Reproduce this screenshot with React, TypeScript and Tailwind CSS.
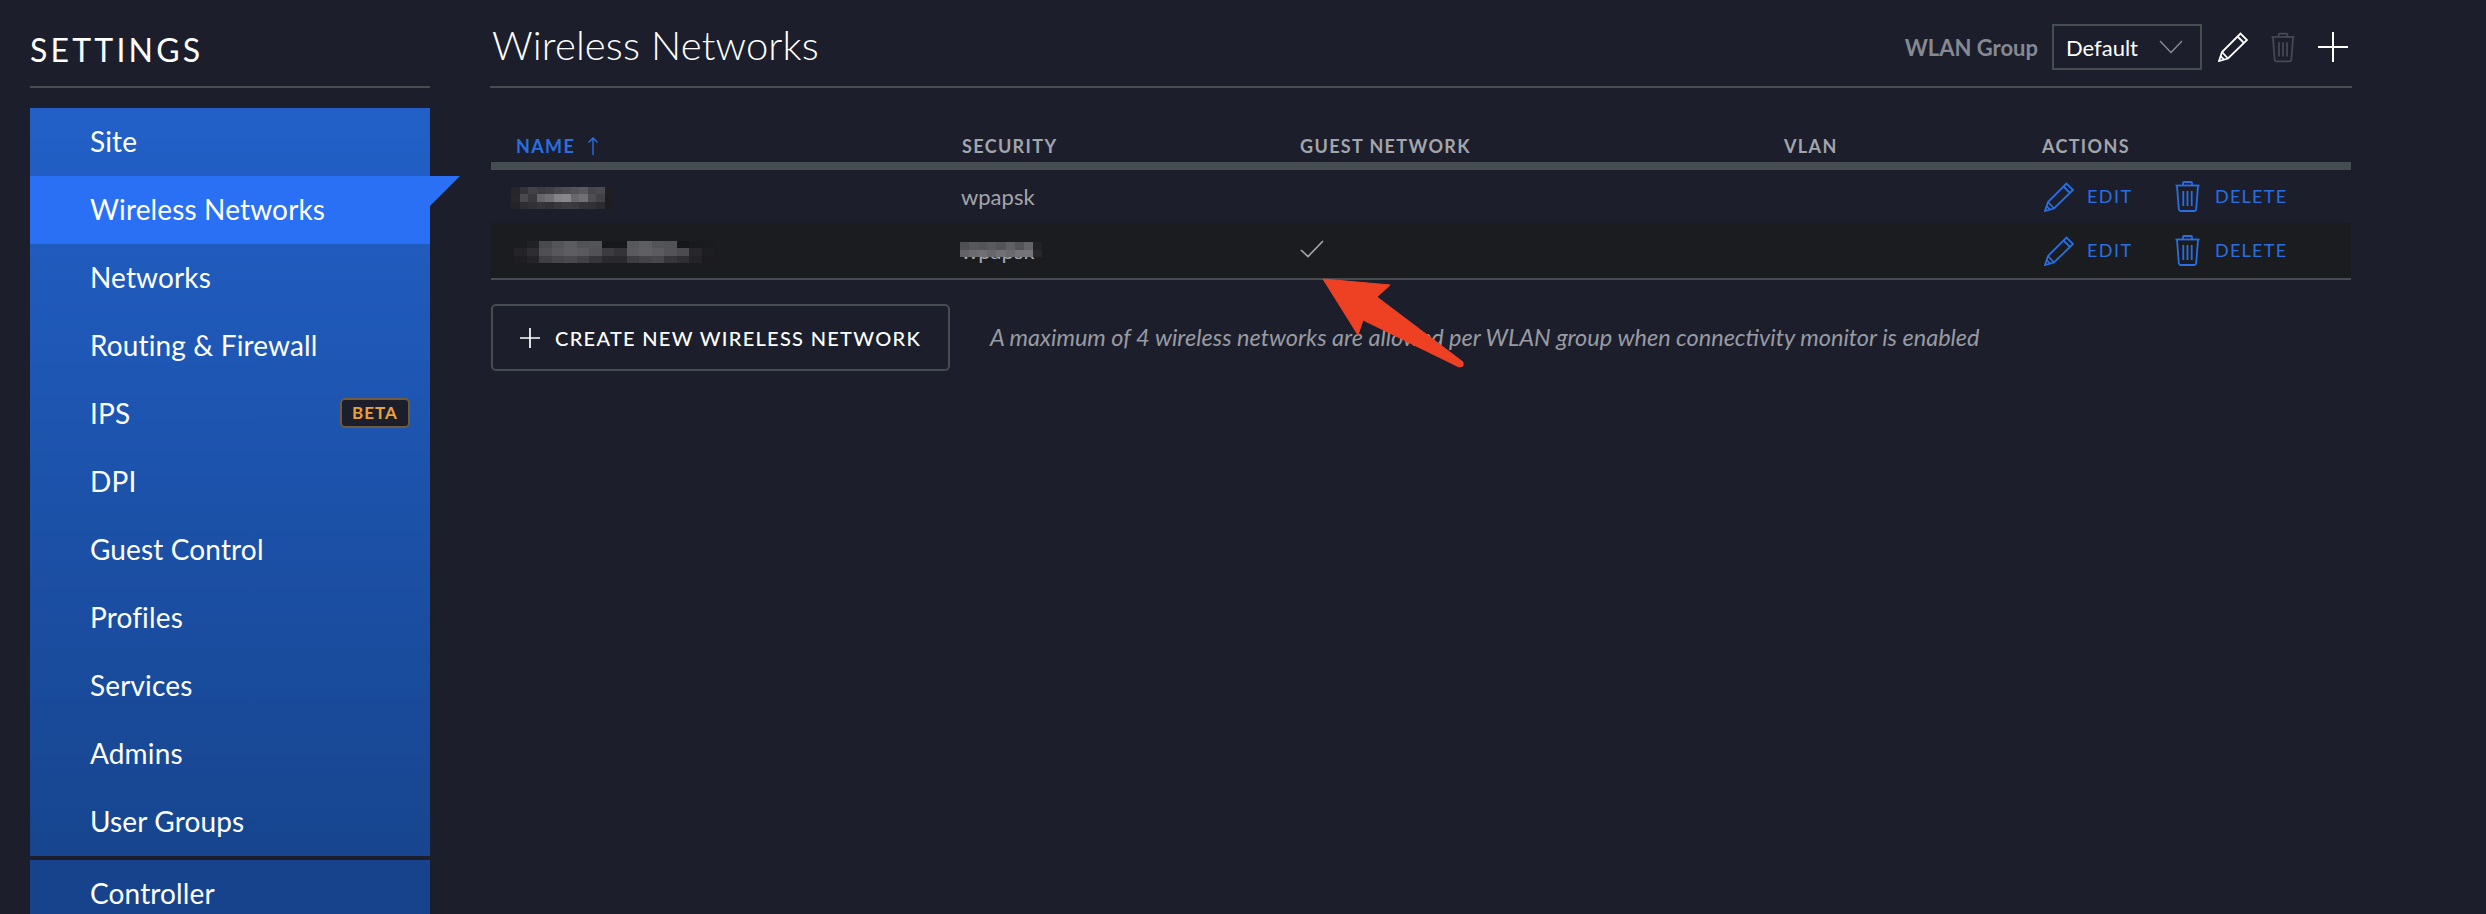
const NAV = ["Site", "Wireless Networks", "Networks", "Routing & Firewall", "IPS", "DPI", "Guest Control", "Profiles", "Services", "Admins", "User Groups"];

function Pencil({ className }: { className: string }) {
  return (
    <svg viewBox="0 0 30 30" className={className} fill="none" stroke="currentColor" strokeWidth="1.8" strokeLinejoin="miter">
      <path d="M1 29 L4 20 L22.5 1.5 L29 8 L10 26.5 Z" />
      <path d="M4 20 L10 26.5" />
      <path d="M19.5 4.5 L26 11" />
      <path d="M2.6 24 L6 27.6" />
    </svg>
  );
}

function Trash({ className }: { className: string }) {
  return (
    <svg viewBox="0 0 25 31" className={className} fill="none" stroke="currentColor" strokeWidth="1.8" strokeLinejoin="round">
      <path d="M0.5 4.5 H24.5" />
      <path d="M2 5 L3.8 28 Q4 30 6 30 H19 Q21 30 21.2 28 L23 5" />
      <path d="M8 4 V1.8 Q8 1 9 1 H16 Q17 1 17 1.8 V4" />
      <path d="M8.3 10 V25 M12.5 10 V25 M16.7 10 V25" />
    </svg>
  );
}

function Mosaic({ w, h, cell, rows, className }: { w: number; h: number; cell: number; rows: number[][]; className: string }) {
  const cellH = h / rows.length;
  return (
    <svg width={w} height={h} className={className} shapeRendering="crispEdges">
      {rows.map((r, y) =>
        r.map((v, x) => (
          <rect key={`${x}-${y}`} x={x * cell} y={y * cellH} width={cell} height={cellH + 0.5} fill={`rgb(${v},${v},${v + 4})`} />
        ))
      )}
    </svg>
  );
}

const M1 = [
  [38, 52, 66, 60, 64, 72, 78, 84, 90, 70, 74, 32],
  [40, 74, 58, 102, 112, 132, 136, 104, 112, 78, 66, 30],
  [36, 46, 50, 54, 50, 56, 60, 58, 52, 50, 44, 29],
];
const M2 = [
  [28, 34, 74, 84, 92, 82, 84, 24, 24, 88, 94, 84, 82, 22, 26, 27],
  [36, 46, 80, 88, 94, 90, 82, 60, 52, 90, 96, 92, 84, 76, 40, 30],
  [30, 36, 64, 70, 74, 66, 54, 42, 42, 62, 68, 72, 54, 48, 36, 28],
];
const M3 = [
  [80, 88, 84, 90, 84, 96, 84, 100, 34],
  [100, 108, 112, 104, 112, 106, 116, 118, 40],
];

function Actions() {
  return (
    <div className="flex items-center text-[#2a6fe0]">
      <Pencil className="w-[30px] h-[30px] ml-[2px]" />
      <span className="ml-[13px] w-[44px] text-[18px] tracking-[0.08em]">EDIT</span>
      <Trash className="w-[25px] h-[31px] ml-[44px]" />
      <span className="ml-[15px] text-[18px] tracking-[0.07em]">DELETE</span>
    </div>
  );
}

function HeaderCell({ className, children }: { className: string; children: React.ReactNode }) {
  return <div className={`text-[18px] font-bold tracking-[0.075em] ${className}`}>{children}</div>;
}

export default function App() {
  return (
    <div className="relative flex h-[914px] w-[2486px] overflow-hidden bg-[#1c1f2b] font-['Lato',sans-serif] text-white">
      <aside className="ml-[30px] w-[400px] shrink-0">
        <div className="flex h-[88px] items-end border-b-2 border-[#454d50] pb-[16px]">
          <h2 className="text-[32px] leading-[40px] tracking-[0.1em]">SETTINGS</h2>
        </div>
        <nav className="mt-[20px] bg-gradient-to-b from-[#2260c8] to-[#17458f]">
          {NAV.map((label, i) =>
            i === 1 ? (
              <div key={label} className="relative flex h-[68px] items-center bg-[#2a70f5] pb-[2px] pl-[60px] text-[28px] tracking-[0.005em]">
                {label}
                <svg viewBox="0 0 30 30" className="absolute left-[400px] top-0 h-[30px] w-[30px]">
                  <polygon points="0,0 30,0 0,30" fill="#2a70f5" />
                </svg>
              </div>
            ) : (
              <div key={label} className="flex h-[68px] items-center justify-between pb-[2px] pl-[60px] pr-[20px] text-[28px] tracking-[0.005em]">
                {label}
                {label === "IPS" && (
                  <span className="flex h-[30px] w-[70px] items-center justify-center rounded-[5px] border-2 border-[#6e5a3c] bg-[#1c1f2b] text-[17px] font-bold tracking-[0.06em] text-[#e8a33d]">
                    BETA
                  </span>
                )}
              </div>
            )
          )}
        </nav>
        <div className="mt-[4px] flex h-[68px] items-center bg-[#17438c] pb-[2px] pl-[60px] text-[28px] tracking-[0.005em]">Controller</div>
      </aside>

      <main className="ml-[60px] w-[1862px] shrink-0">
        <header className="flex h-[88px] items-start justify-between border-b-2 border-[#454d50]">
          <h1 className="ml-[2px] mt-[22px] text-[40px] font-light leading-[46px] tracking-[0.003em]">Wireless Networks</h1>
          <div className="mt-[24px] flex items-center">
            <span className="text-[22px] font-bold text-[#858993]">WLAN Group</span>
            <div className="ml-[14px] flex h-[46px] w-[150px] items-center justify-between border-2 border-[#454d50] pl-[12px] pr-[17px] text-[22px]">
              Default
              <svg viewBox="0 0 24 14" className="h-[14px] w-[24px]" fill="none" stroke="#8a8e96" strokeWidth="1.3">
                <path d="M1 1 L12 12.5 L23 1" />
              </svg>
            </div>
            <Pencil className="ml-[16px] h-[30px] w-[30px] text-white" />
            <Trash className="ml-[23px] h-[31px] w-[24px] text-[#454a55]" />
            <svg viewBox="0 0 30 30" className="ml-[23px] h-[30px] w-[30px]" fill="none" stroke="white" strokeWidth="2">
              <path d="M15 0 V30 M0 15 H30" />
            </svg>
            <div className="w-[4px]" />
          </div>
        </header>

        <section className="ml-[1px] mt-[39px] w-[1860px]">
          <div className="box-content flex h-[32px] items-center border-b-[8px] border-[#454d50] pt-[3px] text-[#a2a5ab]">
            <HeaderCell className="w-[471px] pl-[25px] text-[#2a6fe0]">
              <span className="flex items-center">
                NAME
                <svg viewBox="0 0 12 20" className="ml-[12px] h-[18px] w-[12px]" fill="none" stroke="#2a6fe0" strokeWidth="1.5">
                  <path d="M6 20 V1 M1 6 L6 1 L11 6" />
                </svg>
              </span>
            </HeaderCell>
            <HeaderCell className="w-[338px]">SECURITY</HeaderCell>
            <HeaderCell className="w-[484px]">GUEST NETWORK</HeaderCell>
            <HeaderCell className="w-[258px]">VLAN</HeaderCell>
            <HeaderCell className="">ACTIONS</HeaderCell>
          </div>

          <div className="flex h-[53px] items-center text-[22px] text-[#a2a5ab]">
            <div className="w-[470px] pl-[20px]">
              <Mosaic w={102} h={22} cell={8.5} rows={M1} className="mt-[2px] block" />
            </div>
            <div className="w-[339px]">wpapsk</div>
            <div className="w-[484px]" />
            <div className="w-[258px]" />
            <Actions />
          </div>

          <div className="flex h-[55px] items-center bg-[#1b1c1f] text-[22px] text-[#a2a5ab]">
            <div className="w-[470px] pl-[23px]">
              <Mosaic w={200} h={22} cell={12.5} rows={M2} className="mt-[3px] block" />
            </div>
            <div className="relative w-[339px]">
              wpapsk
              <Mosaic w={82} h={15} cell={9.1} rows={M3} className="absolute left-[-1px] top-[8px]" />
            </div>
            <div className="w-[484px]">
              <svg viewBox="0 0 24 18" className="mb-[3px] h-[18px] w-[24px]" fill="none" stroke="#a2a5ab" strokeWidth="1.7">
                <path d="M1 10 L8 16.5 L23 1" />
              </svg>
            </div>
            <div className="w-[258px]" />
            <Actions />
          </div>
          <div className="h-[2px] bg-[#454d50]" />
        </section>

        <div className="mt-[24px] flex items-center">
          <button className="ml-[1px] flex h-[67px] w-[459px] items-center rounded-[5px] border-2 border-[#454d50] pl-[27px] text-[20px] font-medium tracking-[0.065em]">
            <svg viewBox="0 0 20 20" className="h-[20px] w-[20px]" fill="none" stroke="white" strokeWidth="1.7">
              <path d="M10 0 V20 M0 10 H20" />
            </svg>
            <span className="ml-[15px]">CREATE NEW WIRELESS NETWORK</span>
          </button>
          <p className="ml-[40px] text-[23.5px] italic text-[#989ba3]">
            A maximum of 4 wireless networks are allowed per WLAN group when connectivity monitor is enabled
          </p>
        </div>
      </main>

      <svg viewBox="0 0 2486 914" className="pointer-events-none absolute left-0 top-0 h-[914px] w-[2486px]">
        <polygon
          points="1323,279 1390,285 1377,297 1463,362 1463,366 1459,367 1363,320 1358,335"
          fill="#ee4124"
          stroke="#ee4124"
          strokeWidth="1"
          strokeLinejoin="round"
        />
      </svg>
    </div>
  );
}
